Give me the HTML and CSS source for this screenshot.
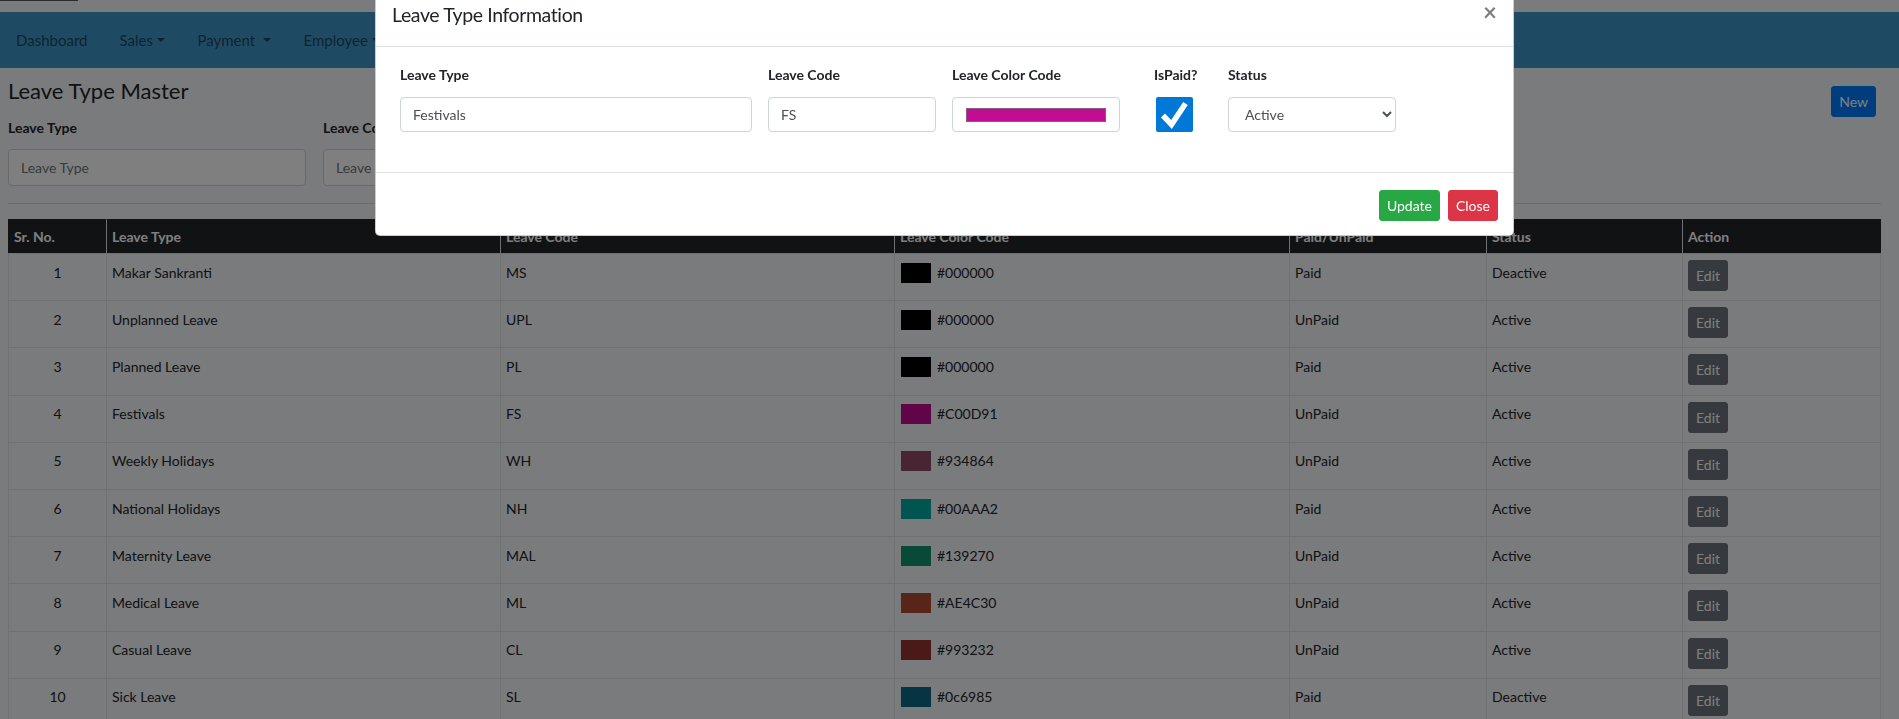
FILE: index.html
```html
<!DOCTYPE html>
<html lang="en">
<head>
<meta charset="utf-8">
<title>Leave Type Master</title>
<link rel="stylesheet" href="styles.css">
</head>
<body>
<div class="top-strip"><div class="top-rule"></div></div>
<nav class="navbar">
  <ul class="nav">
    <li><a class="nav-link" href="#">Dashboard</a></li>
    <li><a class="nav-link dropdown-toggle" href="#">Sales</a></li>
    <li><a class="nav-link dropdown-toggle" href="#">Payment&nbsp;</a></li>
    <li><a class="nav-link dropdown-toggle" href="#">Employee</a></li>
    <li><a class="nav-link" href="#">Leave</a></li>
    <li><a class="nav-link" href="#">Reports</a></li>
  </ul>
</nav>
<main class="content">
  <div class="page-head">
    <h4 class="page-title">Leave Type Master</h4>
    <button class="btn btn-sm btn-primary btn-new">New</button>
  </div>
  <div class="filters">
    <div class="filter"><label class="filter-label">Leave Type</label><input class="filter-input" placeholder="Leave Type"></div>
    <div class="filter"><label class="filter-label">Leave Code</label><input class="filter-input" placeholder="Leave Code"></div>
    <div class="filter"><label class="filter-label">Paid/UnPaid</label><input class="filter-input" placeholder="Paid/UnPaid"></div>
    <div class="filter"><label class="filter-label">Status</label><input class="filter-input" placeholder="Status"></div>
  </div>
  <hr class="divider">
  <table class="grid">
    <colgroup>
      <col class="c-sr"><col class="c-type"><col class="c-code"><col class="c-color"><col class="c-paid"><col class="c-status"><col class="c-action">
    </colgroup>
    <thead>
      <tr><th>Sr. No.</th><th>Leave Type</th><th>Leave Code</th><th>Leave Color Code</th><th>Paid/UnPaid</th><th>Status</th><th>Action</th></tr>
    </thead>
    <tbody>
      <tr><td class="sr">1</td><td>Makar Sankranti</td><td>MS</td><td><span class="swatch" style="background:#000000"></span>#000000</td><td>Paid</td><td>Deactive</td><td class="action"><button class="btn btn-sm btn-secondary">Edit</button></td></tr>
      <tr><td class="sr">2</td><td>Unplanned Leave</td><td>UPL</td><td><span class="swatch" style="background:#000000"></span>#000000</td><td>UnPaid</td><td>Active</td><td class="action"><button class="btn btn-sm btn-secondary">Edit</button></td></tr>
      <tr><td class="sr">3</td><td>Planned Leave</td><td>PL</td><td><span class="swatch" style="background:#000000"></span>#000000</td><td>Paid</td><td>Active</td><td class="action"><button class="btn btn-sm btn-secondary">Edit</button></td></tr>
      <tr><td class="sr">4</td><td>Festivals</td><td>FS</td><td><span class="swatch" style="background:#C00D91"></span>#C00D91</td><td>UnPaid</td><td>Active</td><td class="action"><button class="btn btn-sm btn-secondary">Edit</button></td></tr>
      <tr><td class="sr">5</td><td>Weekly Holidays</td><td>WH</td><td><span class="swatch" style="background:#934864"></span>#934864</td><td>UnPaid</td><td>Active</td><td class="action"><button class="btn btn-sm btn-secondary">Edit</button></td></tr>
      <tr><td class="sr">6</td><td>National Holidays</td><td>NH</td><td><span class="swatch" style="background:#00AAA2"></span>#00AAA2</td><td>Paid</td><td>Active</td><td class="action"><button class="btn btn-sm btn-secondary">Edit</button></td></tr>
      <tr><td class="sr">7</td><td>Maternity Leave</td><td>MAL</td><td><span class="swatch" style="background:#139270"></span>#139270</td><td>UnPaid</td><td>Active</td><td class="action"><button class="btn btn-sm btn-secondary">Edit</button></td></tr>
      <tr><td class="sr">8</td><td>Medical Leave</td><td>ML</td><td><span class="swatch" style="background:#AE4C30"></span>#AE4C30</td><td>UnPaid</td><td>Active</td><td class="action"><button class="btn btn-sm btn-secondary">Edit</button></td></tr>
      <tr><td class="sr">9</td><td>Casual Leave</td><td>CL</td><td><span class="swatch" style="background:#993232"></span>#993232</td><td>UnPaid</td><td>Active</td><td class="action"><button class="btn btn-sm btn-secondary">Edit</button></td></tr>
      <tr><td class="sr">10</td><td>Sick Leave</td><td>SL</td><td><span class="swatch" style="background:#0c6985"></span>#0c6985</td><td>Paid</td><td>Deactive</td><td class="action"><button class="btn btn-sm btn-secondary">Edit</button></td></tr>
    </tbody>
  </table>
</main>

<div class="modal-backdrop"></div>
<div class="modal-dialog">
  <div class="modal-content">
    <div class="modal-header">
      <h5 class="modal-title">Leave Type Information</h5>
      <button class="close" type="button" aria-label="Close">&times;</button>
    </div>
    <div class="modal-body">
      <div class="form-col">
        <label class="form-label">Leave Type</label>
        <input class="form-input" value="Festivals">
      </div>
      <div class="form-col">
        <label class="form-label">Leave Code</label>
        <input class="form-input" value="FS">
      </div>
      <div class="form-col">
        <label class="form-label">Leave Color Code</label>
        <div class="form-input color-field"><span class="color-swatch"></span></div>
      </div>
      <div class="form-col paid-col">
        <label class="form-label">IsPaid?</label>
        <span class="check-box" role="checkbox" aria-checked="true">
          <svg width="37" height="35" viewBox="0 0 37 35"><path d="M7 18.5 L15.5 27.5 L29.5 6.5" fill="none" stroke="#fff" stroke-width="5.5"/></svg>
        </span>
      </div>
      <div class="form-col">
        <label class="form-label">Status</label>
        <select class="form-input form-select"><option>Active</option><option>Deactive</option></select>
      </div>
    </div>
    <div class="modal-footer">
      <button class="btn btn-sm btn-success">Update</button>
      <button class="btn btn-sm btn-danger">Close</button>
    </div>
  </div>
</div>
</body>
</html>
```

FILE: styles.css
```css
* { box-sizing: border-box; }

body {
  margin: 0;
  font-family: Lato, "Segoe UI", "Open Sans", sans-serif;
  font-size: 14px;
  line-height: 1.5;
  color: #212529;
  background: #f4f6f9;
  overflow: hidden;
}

.top-strip { height: 12px; }
.top-rule { width: 78px; height: 1px; background: #555; }

.navbar {
  height: 56px;
  background: #3e94c6;
  display: flex;
  align-items: center;
}
.nav {
  list-style: none;
  margin: 0;
  padding: 0;
  display: flex;
}
.nav-link {
  display: block;
  padding: 8px 16px;
  font-size: 15px;
  color: rgba(0, 0, 0, 0.55);
  text-decoration: none;
}
.dropdown-toggle::after {
  content: "";
  display: inline-block;
  margin-left: 0.3em;
  vertical-align: 0.25em;
  border-top: 0.3em solid;
  border-right: 0.3em solid transparent;
  border-left: 0.3em solid transparent;
}

.content { padding: 0 18px 0 8px; }

.page-head {
  display: flex;
  justify-content: space-between;
  align-items: flex-start;
}
.page-title {
  margin: 10px 0 0;
  font-size: 22px;
  font-weight: 400;
  line-height: 26px;
}
.btn-new { margin: 18px 5px 0 0; }

.filters {
  display: grid;
  grid-template-columns: repeat(4, 298px);
  column-gap: 17px;
}
.filter-label {
  display: block;
  font-weight: 700;
  line-height: 21px;
  margin-bottom: 11px;
}
.filter-input {
  display: block;
  width: 100%;
  height: 37px;
  padding: 0 12px;
  font: inherit;
  color: #495057;
  background: #fff;
  border: 1px solid #ced4da;
  border-radius: 4px;
}
.filter-input::placeholder { color: #6c757d; }

.divider {
  margin: 17px 0 15px;
  border: 0;
  border-top: 1px solid #d6d9dc;
}

.grid {
  width: 1873px;
  table-layout: fixed;
  border-collapse: separate;
  border-spacing: 0;
}
.c-sr { width: 98px; }
.c-type { width: 394px; }
.c-code { width: 394px; }
.c-color { width: 395px; }
.c-paid { width: 197px; }
.c-status { width: 196px; }
.c-action { width: 199px; }

.grid th {
  background: #212529;
  color: #fff;
  font-weight: 700;
  text-align: left;
  padding: 6px 5px;
  line-height: 21px;
  border-top: 1px solid #212529;
  border-left: 1px solid #dee2e6;
}
.grid th:first-child { border-left-color: #212529; }
.grid th:last-child { border-right: 1px solid #212529; }
.grid td {
  padding: 7.6px 5px;
  line-height: 21px;
  vertical-align: top;
  border-top: 1px solid #dee2e6;
  border-left: 1px solid #dee2e6;
}
.grid td:last-child { border-right: 1px solid #dee2e6; }
.grid td.sr { text-align: center; }
.grid td.action { padding-top: 6px; padding-bottom: 9.2px; }

.swatch {
  display: inline-block;
  width: 30px;
  height: 20px;
  margin: 1px 6px 0 1px;
  vertical-align: top;
}

.btn {
  display: inline-block;
  font-family: inherit;
  border: 1px solid transparent;
  color: #fff;
  cursor: pointer;
}
.btn-sm {
  padding: 4px 7px;
  font-size: 14px;
  line-height: 21px;
  border-radius: 3px;
}
.btn-primary { background: #007bff; border-color: #007bff; }
.btn-secondary { background: #6c757d; border-color: #6c757d; }
.btn-success { background: #28a745; border-color: #28a745; }
.btn-danger { background: #dc3545; border-color: #dc3545; }

/* Modal overlay */
.modal-backdrop {
  position: fixed;
  inset: 0;
  background: rgba(0, 0, 0, 0.5);
}
.modal-dialog {
  position: fixed;
  top: -17px;
  left: 375px;
  width: 1139px;
}
.modal-content {
  background: #fff;
  border: 1px solid rgba(0, 0, 0, 0.2);
  border-radius: 5px;
}
.modal-header {
  display: flex;
  align-items: flex-start;
  padding: 16px;
  border-bottom: 1px solid #dee2e6;
}
.modal-title {
  margin: 0;
  font-size: 19.5px;
  letter-spacing: -0.4px;
  font-weight: 400;
  line-height: 30px;
}
.close {
  margin-left: auto;
  padding: 0;
  background: none;
  border: 0;
  font-family: inherit;
  font-size: 24px;
  font-weight: 700;
  line-height: 24px;
  color: #000;
  opacity: 0.5;
}
.modal-body {
  display: grid;
  grid-template-columns: 352px 168px 168px 76px 168px;
  column-gap: 16px;
  padding: 16px 24px 40px;
}
.paid-col { padding-left: 18px; }
.form-label {
  display: block;
  font-weight: 700;
  line-height: 24px;
  margin-bottom: 10px;
}
.form-input {
  display: block;
  width: 100%;
  height: 35px;
  padding: 0 12px;
  font: inherit;
  color: #495057;
  background: #fff;
  border: 1px solid #ced4da;
  border-radius: 4px;
}
.color-field {
  display: flex;
  align-items: center;
  padding: 0 13px 0 13px;
}
.color-swatch {
  display: block;
  width: 100%;
  height: 14px;
  background: #c00d91;
  border: 1px solid #8a5a80;
}
.check-box {
  display: block;
  width: 37px;
  height: 35px;
  margin-left: 2px;
  background: #0078d7;
  border-radius: 2px;
}
.check-box svg { display: block; }
.form-select { padding-left: 12px; }

.modal-footer {
  display: flex;
  justify-content: flex-end;
  gap: 8px;
  padding: 17px 15px 14px;
  border-top: 1px solid #dee2e6;
}
```
